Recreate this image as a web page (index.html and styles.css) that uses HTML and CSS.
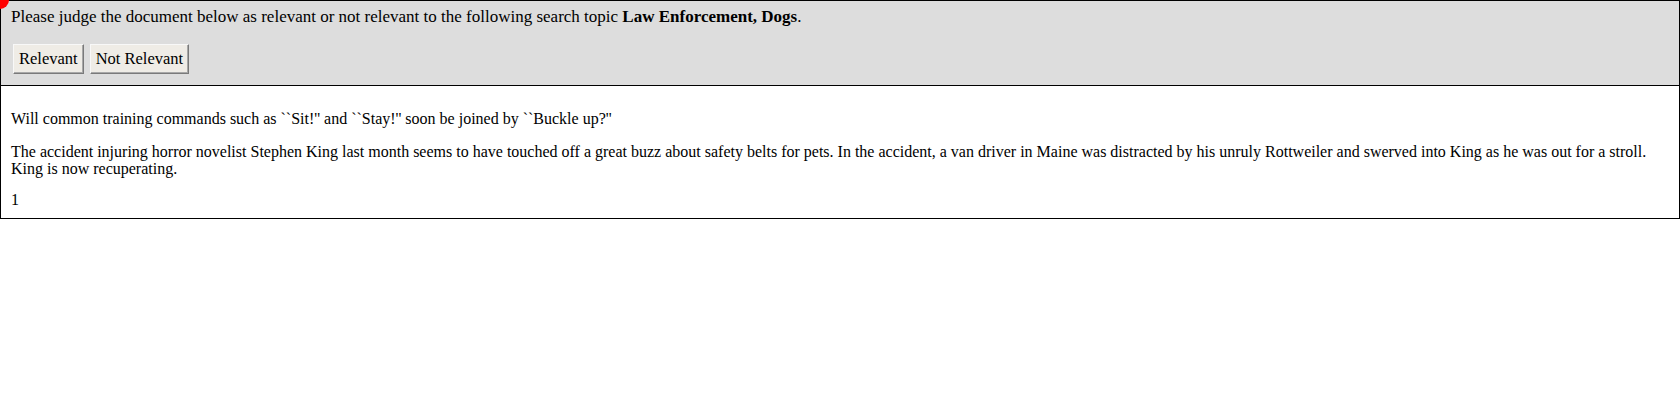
FILE: index.html
```html
<!DOCTYPE html>
<html>
<head>
<meta charset="utf-8">
<link rel="stylesheet" href="styles.css">
</head>
<body>
<div class="dot"></div>
<div class="header">
  <div class="prompt">Please judge the document below as relevant or not relevant to the following search topic <b>Law Enforcement, Dogs</b>.</div>
  <div class="buttons">
    <button class="btn">Relevant</button>
    <button class="btn">Not Relevant</button>
  </div>
</div>
<div class="doc">
  <p class="para">Will common training commands such as ``Sit!'' and ``Stay!'' soon be joined by ``Buckle up?''</p>
  <p class="para last">The accident injuring horror novelist Stephen King last month seems to have touched off a great buzz about safety belts for pets. In the accident, a van driver in Maine was distracted by his unruly Rottweiler and swerved into King as he was out for a stroll. King is now recuperating.</p>
  <div class="num">1</div>
</div>
</body>
</html>
```
FILE: styles.css
```css
html, body {
  margin: 0;
  padding: 0;
  background: #fff;
}
body {
  font-family: "Liberation Serif", "Times New Roman", serif;
  font-size: 16px;
  color: #000;
  position: relative;
}
.dot {
  position: absolute;
  left: -9px;
  top: -9px;
  width: 18px;
  height: 18px;
  border-radius: 50%;
  background: #f00;
  z-index: 2;
}
.header {
  border: 1px solid #000;
  background: #dddddd;
  padding: 6px 10px 11px 10px;
}
.prompt {
  font-size: 17px;
  line-height: 20px;
}
.buttons {
  display: flex;
  gap: 6px;
  margin-top: 17px;
  padding-left: 2px;
}
.btn {
  font-family: "Liberation Serif", "Times New Roman", serif;
  font-size: 16.5px;
  line-height: 18px;
  color: #000;
  background: #efece6;
  padding: 5px 5px;
  margin: 0;
  border: 1px solid;
  border-color: #f8f8f8 #7a7a7a #7a7a7a #f8f8f8;
  box-shadow: inset -1px -1px 0 #a8a8a8;
}
.doc {
  border: 1px solid #000;
  border-top: 0;
  padding: 8px 10px 10px 10px;
}
.para {
  margin: 16px 0;
  line-height: 17px;
}
.para.last {
  margin-bottom: 14px;
}
.num {
  line-height: 17px;
}
```
